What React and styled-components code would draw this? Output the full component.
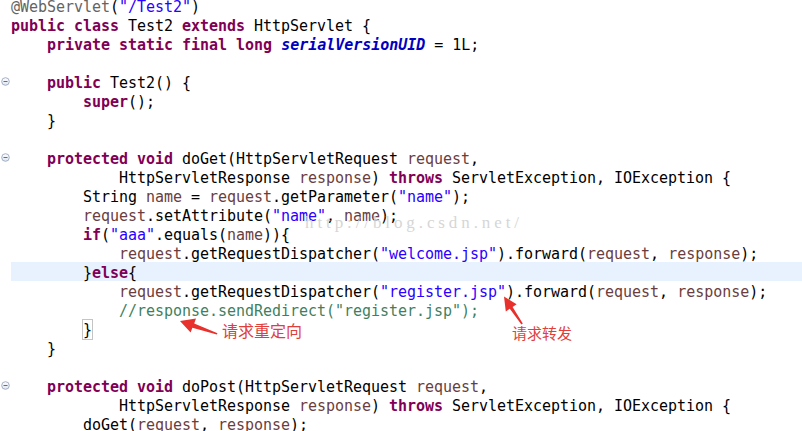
import React from "react";
import styled, { createGlobalStyle } from "styled-components";

const Global = createGlobalStyle`
  html, body { margin: 0; padding: 0; background: #ffffff; }
  body { overflow: hidden; width: 802px; height: 431px; }
`;

const Page = styled.div`
  position: relative;
  width: 802px;
  height: 431px;
  overflow: hidden;
  background: #ffffff;
`;

const Editor = styled.div`
  display: flex;
  flex-direction: column;
  margin-top: -4px;
`;

const Row = styled.div`
  display: flex;
  height: 19px;
`;

const Gutter = styled.div`
  width: 11px;
  flex: none;
  display: flex;
  align-items: center;
  justify-content: flex-start;
`;

const Code = styled.div`
  flex: 1;
  box-sizing: border-box;
  height: 19px;
  padding-top: 2px;
  background: ${(p) => (p.$current ? "#e8f2fe" : "transparent")};
  font-family: "DejaVu Sans Mono", "Liberation Mono", monospace;
  font-size: 15px;
  line-height: 19px;
  white-space: pre;
  color: #000000;
  letter-spacing: -0.03px;
`;

const colors = {
  p: "#000000",
  k: "#7f0055",
  s: "#2a00ff",
  f: "#0000c0",
  a: "#646464",
  c: "#3f7f5f",
  v: "#6a3e3e",
};

const Tok = styled.span`
  color: ${(p) => colors[p.$t]};
  font-weight: ${(p) => (p.$t === "k" || p.$t === "f" ? 700 : 400)};
  font-style: ${(p) => (p.$t === "f" ? "italic" : "normal")};
`;

const Match = styled.span`
  display: inline-block;
  box-sizing: border-box;
  height: 21px;
  line-height: 19px;
  margin-top: -2px;
  padding-top: 1px;
  vertical-align: top;
  border: 1px solid #c4c4c4;
  margin-left: -1px;
  margin-right: -1px;
`;

const FoldIcon = styled.svg`
  width: 9px;
  height: 9px;
  margin-left: 1px;
`;

const Watermark = styled.div`
  position: absolute;
  left: 305px;
  top: 213px;
  font-family: "Liberation Serif", serif;
  font-size: 17px;
  letter-spacing: 3.9px;
  color: #d6d6d6;
  white-space: nowrap;
`;

const Note = styled.div`
  position: absolute;
  left: ${(p) => p.$x}px;
  top: ${(p) => p.$y}px;
  font-family: "Noto Sans CJK SC", sans-serif;
  font-size: ${(p) => p.$size}px;
  line-height: 1;
  color: #e0403c;
  white-space: nowrap;
`;

const Overlay = styled.svg`
  position: absolute;
  left: 0;
  top: 0;
  width: 802px;
  height: 431px;
  pointer-events: none;
`;

const lines = [
  [["a", "@WebServlet"], ["p", "("], ["s", '"/Test2"'], ["p", ")"]],
  [["k", "public"], ["p", " "], ["k", "class"], ["p", " Test2 "], ["k", "extends"], ["p", " HttpServlet {"]],
  [["p", "    "], ["k", "private"], ["p", " "], ["k", "static"], ["p", " "], ["k", "final"], ["p", " "], ["k", "long"], ["p", " "], ["f", "serialVersionUID"], ["p", " = 1L;"]],
  [],
  [["p", "    "], ["k", "public"], ["p", " Test2() {"]],
  [["p", "        "], ["k", "super"], ["p", "();"]],
  [["p", "    }"]],
  [],
  [["p", "    "], ["k", "protected"], ["p", " "], ["k", "void"], ["p", " doGet(HttpServletRequest "], ["v", "request"], ["p", ","]],
  [["p", "            HttpServletResponse "], ["v", "response"], ["p", ") "], ["k", "throws"], ["p", " ServletException, IOException {"]],
  [["p", "        String "], ["v", "name"], ["p", " = "], ["v", "request"], ["p", ".getParameter("], ["s", '"name"'], ["p", ");"]],
  [["p", "        "], ["v", "request"], ["p", ".setAttribute("], ["s", '"name"'], ["p", ", "], ["v", "name"], ["p", ");"]],
  [["p", "        "], ["k", "if"], ["p", "("], ["s", '"aaa"'], ["p", ".equals("], ["v", "name"], ["p", ")){"]],
  [["p", "            "], ["v", "request"], ["p", ".getRequestDispatcher("], ["s", '"welcome.jsp"'], ["p", ").forward("], ["v", "request"], ["p", ", "], ["v", "response"], ["p", ");"]],
  [["p", "        }"], ["k", "else"], ["p", "{"]],
  [["p", "            "], ["v", "request"], ["p", ".getRequestDispatcher("], ["s", '"register.jsp"'], ["p", ").forward("], ["v", "request"], ["p", ", "], ["v", "response"], ["p", ");"]],
  [["p", "            "], ["c", '//response.sendRedirect("register.jsp");']],
  [["p", "        "], ["m", "}"]],
  [["p", "    }"]],
  [],
  [["p", "    "], ["k", "protected"], ["p", " "], ["k", "void"], ["p", " doPost(HttpServletRequest "], ["v", "request"], ["p", ","]],
  [["p", "            HttpServletResponse "], ["v", "response"], ["p", ") "], ["k", "throws"], ["p", " ServletException, IOException {"]],
  [["p", "        doGet("], ["v", "request"], ["p", ", "], ["v", "response"], ["p", ");"]],
];

const folds = new Set([4, 8, 20]);
const currentLine = 14;

function Fold() {
  return (
    <FoldIcon viewBox="0 0 9 9">
      <defs>
        <linearGradient id="fg" x1="0" y1="0" x2="0" y2="1">
          <stop offset="0" stopColor="#ffffff" />
          <stop offset="1" stopColor="#dfe6f0" />
        </linearGradient>
      </defs>
      <circle cx="4.5" cy="4.5" r="3.8" fill="url(#fg)" stroke="#9aa8bf" strokeWidth="0.9" />
      <line x1="2.5" y1="4.5" x2="6.5" y2="4.5" stroke="#5d6f8f" strokeWidth="1" />
    </FoldIcon>
  );
}

export default function App() {
  return (
    <Page>
      <Global />
      <Editor>
        {lines.map((toks, i) => (
          <Row key={i}>
            <Gutter>{folds.has(i) ? <Fold /> : null}</Gutter>
            <Code $current={i === currentLine}>
              {toks.length === 0
                ? " "
                : toks.map(([t, text], j) =>
                    t === "m" ? (
                      <Match key={j}>{text}</Match>
                    ) : (
                      <Tok key={j} $t={t}>
                        {text}
                      </Tok>
                    )
                  )}
            </Code>
          </Row>
        ))}
      </Editor>
      <Watermark>http://blog.csdn.net/</Watermark>
      <Overlay viewBox="0 0 802 431">
        <polygon
          points="180,321 196,318.5 194.2,323.6 217.5,333.2 216.8,334.6 192.4,327.8 190.6,332.6"
          fill="#e8302c"
        />
        <polygon
          points="504,296.5 516.6,304.2 512.6,307 522.8,323.6 521.4,324.4 509.8,308.8 505.8,311.6"
          fill="#e8302c"
        />
      </Overlay>
      <Note $x={222} $y={322} $size={16}>请求重定向</Note>
      <Note $x={512} $y={325} $size={15}>请求转发</Note>
    </Page>
  );
}
